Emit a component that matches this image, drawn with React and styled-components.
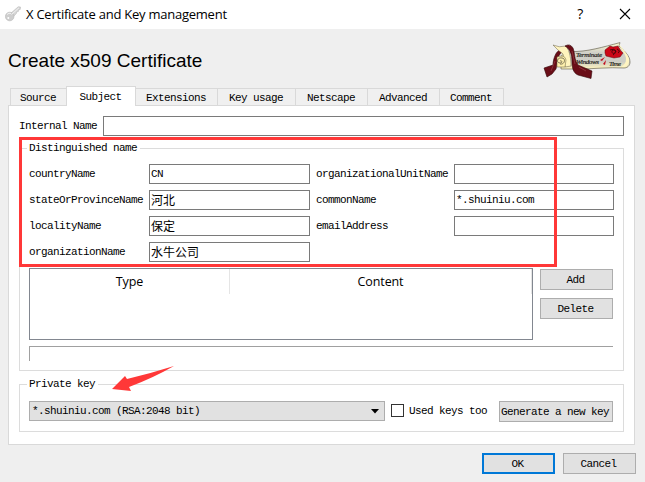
import React from "react";
import styled, { createGlobalStyle } from "styled-components";

const Global = createGlobalStyle`
  *, *::before, *::after { box-sizing: border-box; }
  body { margin: 0; overflow: hidden; background: #f0f0f0; }
`;

const Dialog = styled.div`
  position: relative;
  width: 645px;
  height: 482px;
  background: #efefef;
  color: #000;
  font: 11px/14px "Liberation Mono", "Noto Sans CJK SC", monospace;
  letter-spacing: -0.6px;
  white-space: pre;
  overflow: hidden;
`;

const TitleBar = styled.header`
  display: flex;
  align-items: center;
  height: 29px;
  padding: 0 14px 2px 5px;
  background: #fff;
`;

const TitleText = styled.span`
  flex: 1;
  margin-left: 5px;
  font: 13px/20px "Open Sans", "Noto Sans", sans-serif;
  letter-spacing: -0.24px;
`;

const HelpButton = styled.span`
  width: 10px;
  margin-right: 34px;
  font: 500 14px/20px "Open Sans", sans-serif;
  text-align: center;
`;

const Heading = styled.div`
  display: flex;
  justify-content: space-between;
  height: 57px;
  padding: 13px 14px 0 8px;
`;

const HeadingText = styled.h1`
  margin: 8px 0 0;
  font: 19px/22px "Liberation Sans", Arial, sans-serif;
  letter-spacing: 0;
`;

const Tabs = styled.nav`
  display: flex;
  align-items: flex-end;
  height: 19px;
  padding-left: 10px;
`;

const Tab = styled.div`
  position: relative;
  width: ${(p) => p.$width}px;
  height: ${(p) => (p.$active ? 20 : 17)}px;
  margin-bottom: ${(p) => (p.$active ? -1 : 0)}px;
  padding: ${(p) => (p.$active ? 3 : 2)}px 1px 0 0;
  border: 1px solid #d9d9d9;
  border-width: ${(p) => (p.$active ? "1px 1px 0" : "1px 0 0 1px")};
  background: ${(p) => (p.$active ? "#fff" : "#f0f0f0")};
  text-align: center;
  z-index: ${(p) => (p.$active ? 1 : 0)};
  &:last-child { border-right-width: 1px; }
  ${(p) => p.$afterActive && "border-left-width: 0;"}
`;

const Pane = styled.main`
  display: flex;
  flex-direction: column;
  width: 627px;
  height: 340px;
  margin-left: 8px;
  padding: 10px;
  border: 1px solid #d9d9d9;
  background: #fff;
`;

const InternalRow = styled.div`
  display: flex;
  align-items: center;
  width: 605px;
`;

const FieldLabel = styled.label`
  width: ${(p) => p.$width}px;
  flex: none;
`;

const Input = styled.div`
  flex: 1;
  height: 20px;
  padding: 2px 0 0 1px;
  border: 1px solid #7a7a7a;
  background: #fff;
`;

const Cjk = styled.span`
  display: block;
  margin-top: -1px;
  font: 12px/15px "Noto Sans CJK SC", sans-serif;
  letter-spacing: 0;
`;

const Group = styled.section`
  width: 605px;
  height: ${(p) => p.$height}px;
  margin-top: ${(p) => p.$top}px;
  border: 1px solid #dcdcdc;
`;

const Legend = styled.div`
  width: max-content;
  height: 14px;
  margin: -8px 0 0 7px;
  padding: 0 3px 0 2px;
  background: #fff;
`;

const NameGrid = styled.div`
  display: grid;
  grid-template-columns: 281px 298px;
  column-gap: 6px;
  row-gap: 6px;
  margin: 9px 0 0 9px;
`;

const NameField = styled.div`
  display: flex;
  align-items: center;
`;

const TableRow = styled.div`
  display: flex;
  gap: 7px;
  margin: 6px 0 0 9px;
`;

const Table = styled.div`
  width: 504px;
  height: 72px;
  border: 1px solid #828790;
`;

const TableHead = styled.div`
  display: flex;
  height: 25px;
  font: 12.5px/25px "Open Sans", "Noto Sans", sans-serif;
  letter-spacing: -0.1px;
  text-align: center;
`;

const HeadCell = styled.div`
  width: ${(p) => p.$width}px;
  border-right: 1px solid #e5e5e5;
`;

const ButtonColumn = styled.div`
  display: flex;
  flex-direction: column;
  gap: 8px;
  padding-top: 1px;
`;

const Button = styled.button`
  width: ${(p) => p.$width || 73}px;
  height: 21px;
  flex: none;
  padding: 1px 2px 0 0;
  border: ${(p) => (p.$primary ? "2px solid #0078d7" : "1px solid #adadad")};
  background: #e1e1e1;
  color: #000;
  font: inherit;
  letter-spacing: inherit;
  text-align: center;
`;

const Status = styled.div`
  width: 584px;
  height: 15px;
  margin: 6px 0 0 9px;
  border: solid #a0a0a0;
  border-width: 1px 0 0 1px;
`;

const KeyRow = styled.div`
  display: flex;
  align-items: flex-start;
  margin: 10px 0 0 9px;
`;

const Combo = styled.div`
  display: flex;
  justify-content: space-between;
  width: 356px;
  height: 20px;
  padding: 2px 5px 0 2px;
  border: 1px solid #adadad;
  background: #e1e1e1;
`;

const Caret = styled.svg`
  margin-top: 5px;
`;

const Checkbox = styled.span`
  width: 13px;
  height: 13px;
  margin: 3px 5px 0 6px;
  border: 1px solid #333;
  background: #fff;
`;

const CheckLabel = styled.span`
  width: 90px;
  padding-top: 3px;
`;

const Footer = styled.footer`
  display: flex;
  justify-content: flex-end;
  gap: 8px;
  padding: 8px 9px 0 0;
`;

const Highlight = styled.div`
  position: absolute;
  left: 19px;
  top: 137px;
  width: 538px;
  height: 130px;
  border: 3px solid #ff3838;
  z-index: 2;
`;

const Arrow = styled.svg`
  position: absolute;
  left: 110px;
  top: 364px;
  z-index: 2;
`;

const KeyIcon = () => (
  <svg width="16" height="16" viewBox="0 0 16 16">
    <path d="M5.5 7.5 13.2.8l2.3.2-.3 2.5-1.7.4-.2 1.7-1.7.2-.2 1.6L8.5 10.5z" fill="#d6d6d6" stroke="#bbb" strokeWidth=".6" />
    <circle cx="4.7" cy="10.5" r="4.3" fill="#cecece" stroke="#b8b8b8" strokeWidth=".6" />
    <path d="M6.5 8.5 14 1.8M2 8.5q2-2 4-1" stroke="#f2f2f2" fill="none" />
    <circle cx="3.3" cy="12" r="1" fill="#fff" />
  </svg>
);

const Scroll = () => (
  <svg width="88" height="38" viewBox="0 0 88 38">
    <defs>
      <linearGradient id="paper" x1="0" y1="0" x2="0" y2="1">
        <stop offset="0" stopColor="#fffbd0" />
        <stop offset=".38" stopColor="#d0d0c8" />
        <stop offset=".72" stopColor="#cdcdc5" />
        <stop offset="1" stopColor="#fff5bd" />
      </linearGradient>
    </defs>
    <path d="M28 9.5C44 10 60 5 77 .6L76 4c4 4 11 9 11 16 0 4-3 6-6 6-16-1-30 1-46 1H18V14z" fill="url(#paper)" stroke="#55513f" strokeWidth=".6" />
    <path d="M76 2c2 6 7 10 7 15 0 4-2 6-5 8h4c6-3 5-9 1-14z" fill="#fff5c1" />
    <path d="M18 9q7 2 9 15h-6z" fill="#d9d4ac" />
    <path d="M17 8c-4 1-7 9-7 15l-9 3 3 9 5-3 4-5c2-8 1-13 6-17z" fill="#6a0d17" stroke="#330507" strokeWidth=".6" />
    <path d="M10 3q6 3 13 1c4 5 5 14 5 20l-6 1-2-13-5-4z" fill="#fff4bd" stroke="#665e45" strokeWidth=".5" />
    <path d="M22 4q5-3 8 2c2 5 1 12 5 17l14 6-1 7.5-13-3.5c-5-2-6-8-6-13 0-8-2-13-7-16z" fill="#6a0d17" stroke="#330507" strokeWidth=".6" />
    <path d="m29 9 3 13m4 3 7 4m-31-10-4 10" stroke="#9a4a4f" strokeWidth=".6" fill="none" />
    <path d="M14 15q8-3 9 3l-1 7h-8z" fill="#fff1ad" stroke="#655c3e" strokeWidth=".5" />
    <path d="M17 22c5 1 6-6 2-6-5-1-6 5-2 5 3 0 2-3 0-2" fill="none" stroke="#494337" strokeWidth=".7" />
    <g fill="#171712" stroke="#171712" strokeWidth=".15" fontFamily="Liberation Serif" fontStyle="italic" fontSize="7" letterSpacing="0">
      <text x="33" y="15" textLength="26">Terminate</text>
      <text x="33" y="22" textLength="23">Windows</text>
      <text x="66" y="24" textLength="12">Time</text>
    </g>
    <path d="m62 8 5-4 3 1 5-1 3 5 2 2-3 4-6 1-4-1-4-1-1-3z" fill="#cb0716" stroke="#630811" strokeWidth=".5" />
    <path d="M67 8q4-2 6 1c-2 5-6 1-3-1 4 0 3 3 0 5m4-6q4 2 1 4" fill="none" stroke="#410508" strokeWidth=".9" />
    <path d="m57 18 5-3-3 4zM60 22l3-4-1 5z" fill="#c20d1d" />
  </svg>
);

const Field = ({ label, value, cjk, labelWidth }) => (
  <NameField>
    <FieldLabel $width={labelWidth}>{label}</FieldLabel>
    <Input>{cjk ? <Cjk>{value}</Cjk> : value}</Input>
  </NameField>
);

export default function App() {
  return (
    <Dialog>
      <Global />
      <TitleBar>
        <KeyIcon />
        <TitleText>X Certificate and Key management</TitleText>
        <HelpButton>?</HelpButton>
        <svg width="12" height="12" viewBox="0 0 12 12">
          <path d="M1 1l10 10M11 1 1 11" stroke="#000" strokeWidth="1.1" />
        </svg>
      </TitleBar>
      <Heading>
        <HeadingText>Create x509 Certificate</HeadingText>
        <Scroll />
      </Heading>
      <Tabs>
        <Tab $width={56}>Source</Tab>
        <Tab $width={70} $active>Subject</Tab>
        <Tab $width={81} $afterActive>Extensions</Tab>
        <Tab $width={78}>Key usage</Tab>
        <Tab $width={72}>Netscape</Tab>
        <Tab $width={72}>Advanced</Tab>
        <Tab $width={65}>Comment</Tab>
      </Tabs>
      <Pane>
        <InternalRow>
          <FieldLabel $width={84}>Internal Name</FieldLabel>
          <Input />
        </InternalRow>
        <Group $height={223} $top={12}>
          <Legend>Distinguished name</Legend>
          <NameGrid>
            <Field labelWidth={120} label="countryName" value="CN" />
            <Field labelWidth={138} label="organizationalUnitName" />
            <Field labelWidth={120} label="stateOrProvinceName" value="河北" cjk />
            <Field labelWidth={138} label="commonName" value="*.shuiniu.com" />
            <Field labelWidth={120} label="localityName" value="保定" cjk />
            <Field labelWidth={138} label="emailAddress" />
            <Field labelWidth={120} label="organizationName" value="水牛公司" cjk />
          </NameGrid>
          <TableRow>
            <Table>
              <TableHead>
                <HeadCell $width={200}>Type</HeadCell>
                <HeadCell $width={302}>Content</HeadCell>
              </TableHead>
            </Table>
            <ButtonColumn>
              <Button>Add</Button>
              <Button>Delete</Button>
            </ButtonColumn>
          </TableRow>
          <Status />
        </Group>
        <Group $height={48} $top={13}>
          <Legend>Private key</Legend>
          <KeyRow>
            <Combo>
              *.shuiniu.com (RSA:2048 bit)
              <Caret width="8" height="5" viewBox="0 0 8 5"><path d="M0 0h8L4 4.5z" /></Caret>
            </Combo>
            <Checkbox />
            <CheckLabel>Used keys too</CheckLabel>
            <Button $width={114}>Generate a new key</Button>
          </KeyRow>
        </Group>
      </Pane>
      <Footer>
        <Button $primary>OK</Button>
        <Button>Cancel</Button>
      </Footer>
      <Highlight />
      <Arrow width="66" height="30" viewBox="0 0 66 30">
        <path d="M2 25 15 12l2 3Q42 9 64 2 43 14 19 23l2 4z" fill="#ff3838" />
      </Arrow>
    </Dialog>
  );
}
